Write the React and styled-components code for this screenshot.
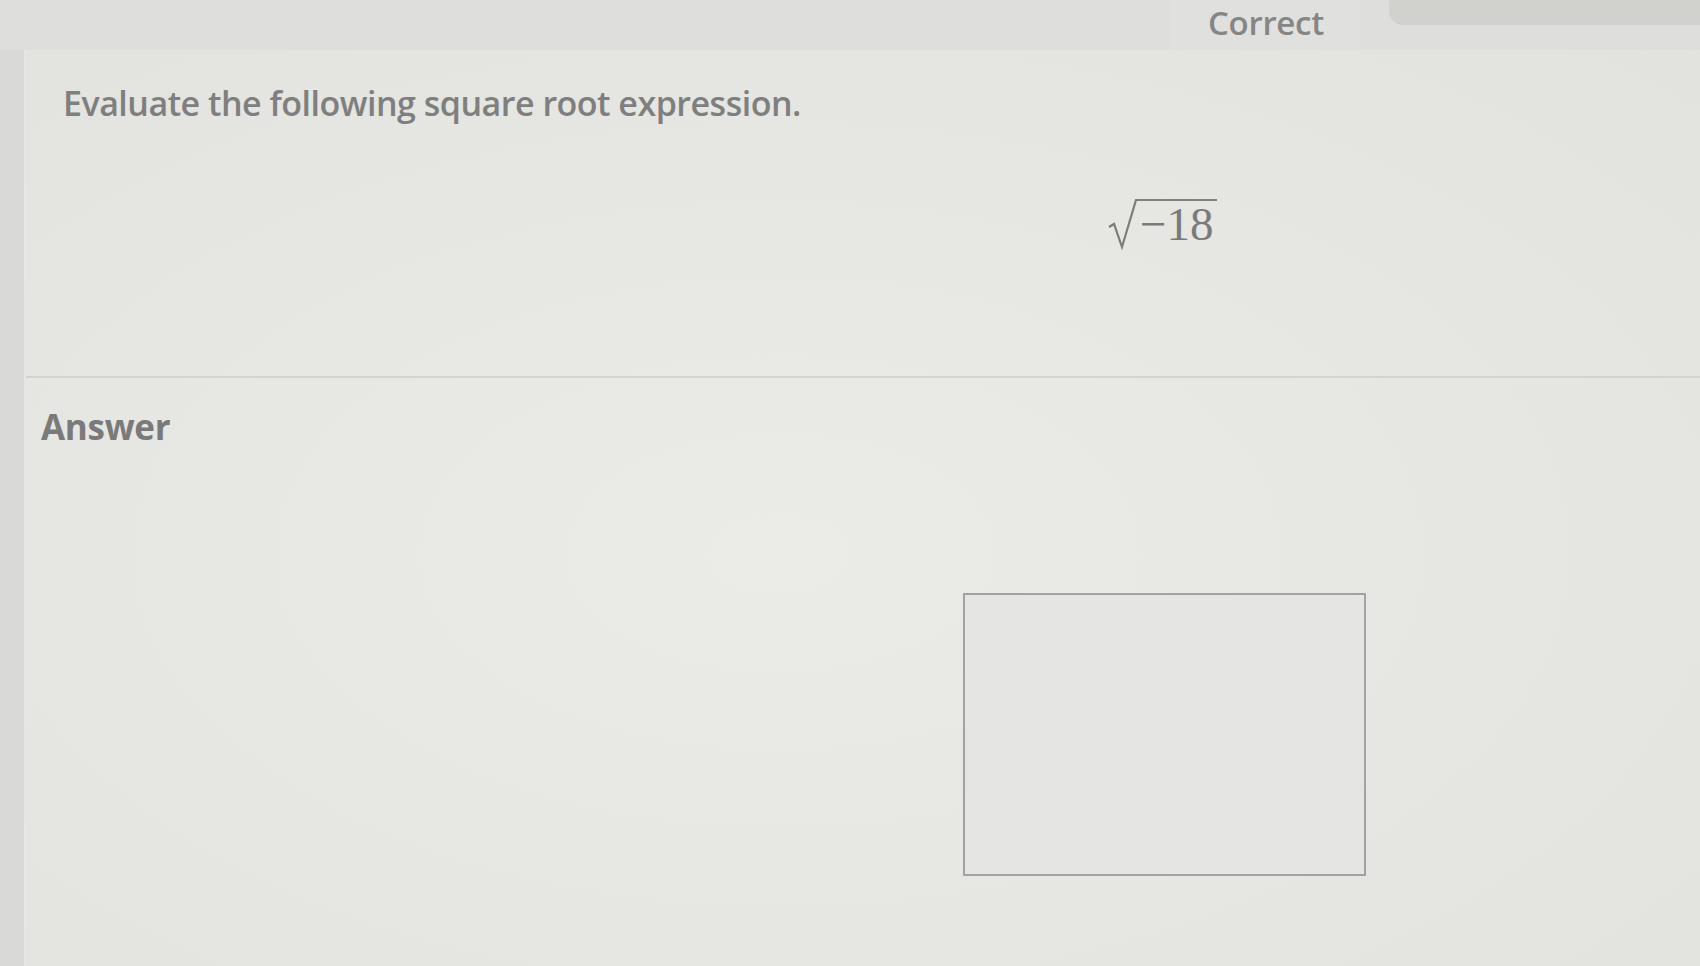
import React from 'react'
import styled, { createGlobalStyle } from 'styled-components'

const GlobalStyle = createGlobalStyle`
  html, body {
    margin: 0;
    padding: 0;
    background: #dcdcda;
    font-family: "Open Sans", "Liberation Sans", sans-serif;
  }
`;

const Page = styled.div`
  width: 1700px;
  height: 966px;
  display: flex;
  flex-direction: column;
  overflow: hidden;
`;

const TopBar = styled.header`
  height: 50px;
  display: flex;
  align-items: flex-start;
  background: #dededc;
`;

const Spacer = styled.div`
  flex: 1;
`;

const StatusTab = styled.div`
  width: 190px;
  height: 50px;
  padding: 3px 0 0 38px;
  box-sizing: border-box;
  background: #e0e0de;
`;

const StatusText = styled.span`
  display: block;
  font-size: 33px;
  font-weight: 600;
  line-height: 40px;
  color: #868686;
  letter-spacing: -0.3px;
`;

const ProgressPill = styled.div`
  width: 311px;
  height: 25px;
  margin-left: 29px;
  border-radius: 0 0 0 14px;
  background: #d1d1cd;
`;

const Body = styled.div`
  flex: 1;
  display: flex;
`;

const SideStrip = styled.aside`
  width: 24px;
  background: #d9d9d7;
  border-right: 2px solid #e6e6e4;
`;

const Panel = styled.main`
  flex: 1;
  display: flex;
  flex-direction: column;
  background: radial-gradient(ellipse at 45% 55%, #ebebe8 0%, #e6e6e2 55%, #e2e2de 100%);
`;

const QuestionSection = styled.section`
  height: 326px;
  padding: 30px 0 0 37px;
  box-sizing: border-box;
`;

const Prompt = styled.p`
  margin: 0;
  font-size: 34px;
  font-weight: 600;
  line-height: 46px;
  color: #7f7f7f;
  letter-spacing: -0.5px;
`;

const ExpressionRow = styled.div`
  display: flex;
  padding: 71px 0 0 1045px;
`;

const Radical = styled.span`
  display: inline-flex;
  align-items: flex-start;
  font-family: "Liberation Serif", "DejaVu Serif", serif;
  color: #7a7a7a;
`;

const Radicand = styled.span`
  font-size: 47px;
  line-height: 45px;
  padding: 1px 3px 0 2px;
  border-top: 2px solid #808080;
  margin-top: 2px;
`;

const Divider = styled.hr`
  margin: 0;
  border: 0;
  height: 2px;
  background: #d3d3cf;
`;

const AnswerSection = styled.section`
  flex: 1;
  display: flex;
  flex-direction: column;
  padding: 26px 0 0 15px;
`;

const AnswerLabel = styled.h2`
  margin: 0;
  font-size: 35px;
  font-weight: 700;
  line-height: 46px;
  color: #7a7a7a;
  letter-spacing: -0.3px;
`;

const AnswerBox = styled.div`
  width: 399px;
  height: 279px;
  margin: 143px 0 0 922px;
  border: 2px solid #a2a2a2;
  background: #e5e5e4;
`;

const SquareRoot = ({ children }) => (
  <Radical>
    <svg width="30" height="54" viewBox="0 0 30 54">
      <path
        d="M1 30 L6 27 L14 50 L28 3 L30 3"
        fill="none"
        stroke="#7c7c7c"
        strokeWidth="2.2"
        strokeLinejoin="miter"
      />
    </svg>
    <Radicand>{children}</Radicand>
  </Radical>
);

const App = () => {
  return (
    <Page>
      <GlobalStyle />
      <TopBar>
        <Spacer />
        <StatusTab>
          <StatusText>Correct</StatusText>
        </StatusTab>
        <ProgressPill />
      </TopBar>
      <Body>
        <SideStrip />
        <Panel>
          <QuestionSection>
            <Prompt>Evaluate the following square root expression.</Prompt>
            <ExpressionRow>
              <SquareRoot>−18</SquareRoot>
            </ExpressionRow>
          </QuestionSection>
          <Divider />
          <AnswerSection>
            <AnswerLabel>Answer</AnswerLabel>
            <AnswerBox />
          </AnswerSection>
        </Panel>
      </Body>
    </Page>
  )
}

export default App
